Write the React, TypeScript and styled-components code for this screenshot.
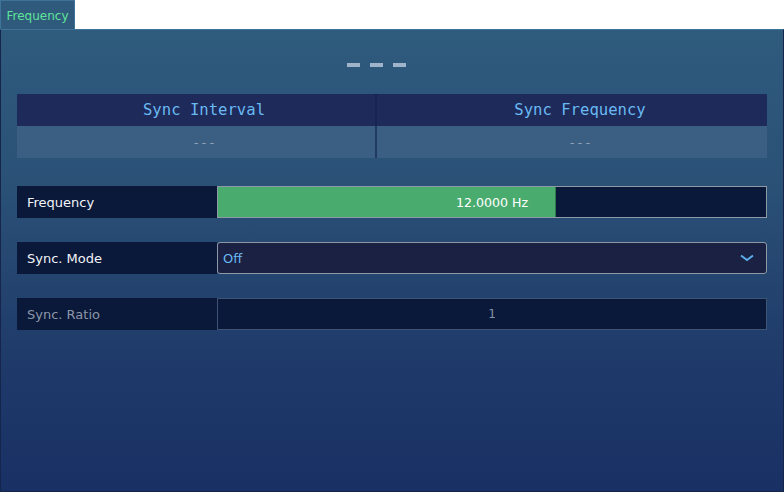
import React from "react";
import styled, { createGlobalStyle } from "styled-components";

const Global = createGlobalStyle`
  html, body { margin: 0; padding: 0; background: #ffffff; }
  body { font-family: "DejaVu Sans", Verdana, sans-serif; }
  * { box-sizing: border-box; }
`;

const Page = styled.div`
  width: 784px;
  height: 492px;
  display: flex;
  flex-direction: column;
`;

const TabBar = styled.div`
  height: 29px;
  display: flex;
  align-items: stretch;
  background: #ffffff;
`;

const Tab = styled.div`
  width: 75px;
  background: #2f5a7c;
  border: 1px solid #3d7497;
  border-bottom: none;
  color: #5fe39a;
  font-size: 12px;
  display: flex;
  align-items: center;
  justify-content: center;
  padding-top: 1px;
`;

const Panel = styled.div`
  flex: 1;
  background: linear-gradient(180deg, #2f5b7d 0%, #2a5076 35%, #1f3b6a 70%, #193064 100%);
  border: 1px solid #16254c;
  border-top: 1px solid #3d7497;
  padding: 0 16px 0 16px;
  display: flex;
  flex-direction: column;
`;

const BigDashes = styled.div`
  height: 64px;
  display: flex;
  align-items: flex-start;
  justify-content: center;
  gap: 10px;
  padding-top: 33px;
  margin-right: 32px;
`;

const Dash = styled.span`
  width: 13px;
  height: 4px;
  background: #9fb3cb;
`;

const Table = styled.div`
  display: grid;
  grid-template-columns: 358px 2px 1fr;
  grid-template-rows: 32px 32px;
`;

const HeadCell = styled.div`
  background: #1e2a5a;
  color: #69b9f2;
  font-family: "DejaVu Sans Mono", monospace;
  font-size: 15.6px;
  display: flex;
  align-items: center;
  justify-content: center;
  padding-left: 16px;
`;

const ValueCell = styled.div`
  background: #3a5f82;
  color: #8ea3bb;
  font-family: "DejaVu Sans Mono", monospace;
  font-size: 13px;
  display: flex;
  align-items: center;
  justify-content: center;
  padding-left: 16px;
`;

const Divider = styled.div<{ $row: number }>`
  background: ${(p) => (p.$row === 0 ? "#172352" : "#1f3a63")};
`;

const Rows = styled.div`
  display: flex;
  flex-direction: column;
  gap: 24px;
  margin-top: 28px;
`;

const Row = styled.div`
  display: grid;
  grid-template-columns: 200px 1fr;
  height: 32px;
`;

const Label = styled.div<{ $disabled?: boolean }>`
  background: #0a1839;
  color: ${(p) => (p.$disabled ? "#8b97a8" : "#f2f4f8")};
  font-size: 13px;
  display: flex;
  align-items: center;
  padding-left: 10px;
`;

const Bar = styled.div`
  position: relative;
  background: #0a1839;
  border: 1px solid #8d9aa6;
  display: flex;
  align-items: stretch;
`;

const Fill = styled.div`
  background: #4aab6f;
  border-right: 1px solid #2e7a4c;
`;

const BarText = styled.span`
  position: absolute;
  inset: 0;
  display: flex;
  align-items: center;
  justify-content: center;
  color: #ffffff;
  font-size: 12.6px;
`;

const Select = styled.div`
  background: #1a2142;
  border: 1px solid #8d9aa6;
  border-radius: 3px;
  display: flex;
  align-items: center;
  justify-content: space-between;
  padding: 0 12px 0 5px;
  color: #6ab9f2;
  font-size: 13px;
`;

const Input = styled.div`
  background: #0a1839;
  border: 1px solid #3e5474;
  display: flex;
  align-items: center;
  justify-content: center;
  color: #8593a6;
  font-size: 12px;
`;

export default function App() {
  const value = 12;
  const max = 20;
  const pct = (value / max) * 100 * 0.617 / 0.6;
  return (
    <>
      <Global />
      <Page>
        <TabBar>
          <Tab>Frequency</Tab>
        </TabBar>
        <Panel>
          <BigDashes>
            <Dash />
            <Dash />
            <Dash />
          </BigDashes>
          <Table>
            <HeadCell>Sync Interval</HeadCell>
            <Divider $row={0} />
            <HeadCell>Sync Frequency</HeadCell>
            <ValueCell>---</ValueCell>
            <Divider $row={1} />
            <ValueCell>---</ValueCell>
          </Table>
          <Rows>
            <Row>
              <Label>Frequency</Label>
              <Bar>
                <Fill style={{ width: `${pct}%` }} />
                <BarText>12.0000 Hz</BarText>
              </Bar>
            </Row>
            <Row>
              <Label>Sync. Mode</Label>
              <Select>
                <span>Off</span>
                <svg width="14" height="8" viewBox="0 0 14 8">
                  <path d="M1 1.5 L7 6 L13 1.5" fill="none" stroke="#5aaeea" strokeWidth="2" />
                </svg>
              </Select>
            </Row>
            <Row>
              <Label $disabled>Sync. Ratio</Label>
              <Input>1</Input>
            </Row>
          </Rows>
        </Panel>
      </Page>
    </>
  );
}
